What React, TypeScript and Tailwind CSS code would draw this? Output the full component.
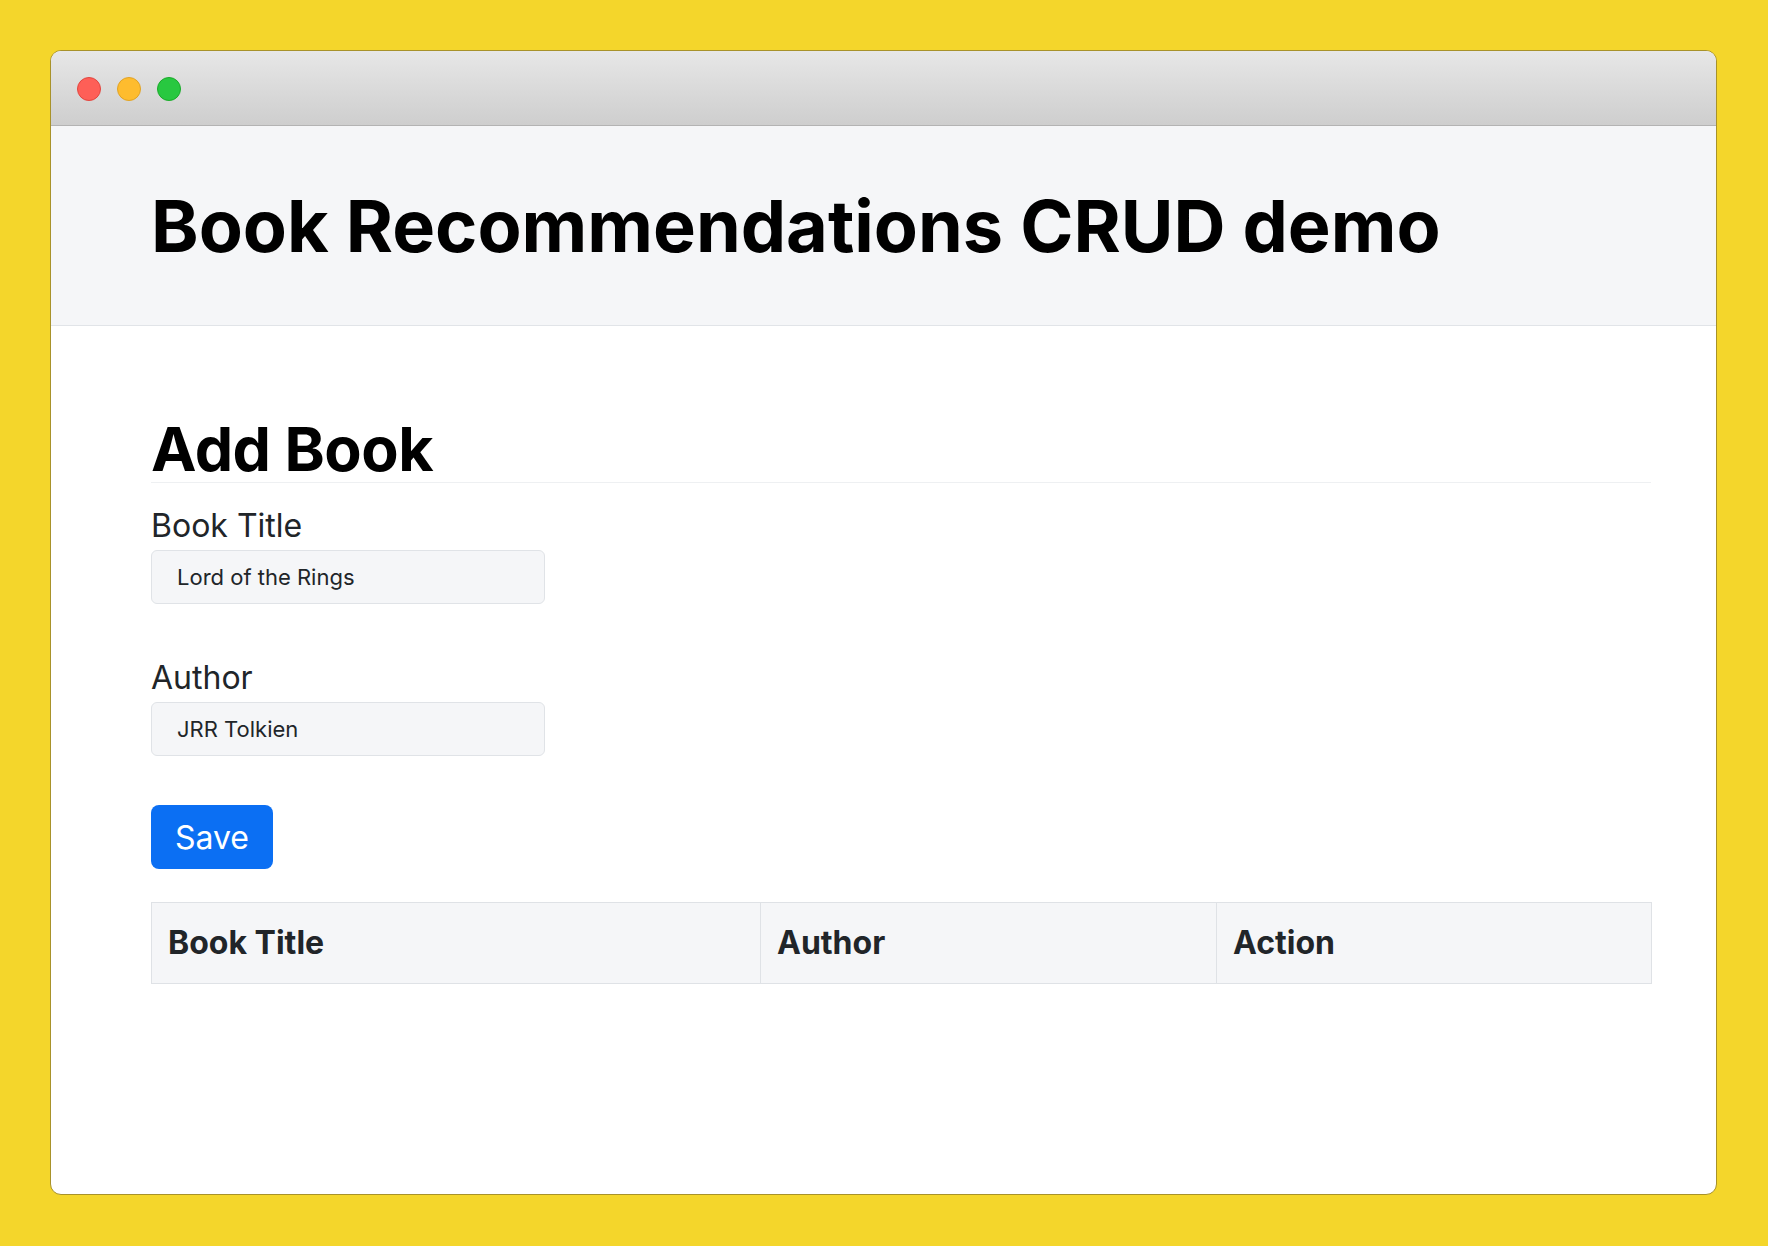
const font = { fontFamily: "Inter, 'Noto Sans', sans-serif" };

function TrafficLights() {
  return (
    <div className="mt-[2px] flex items-center gap-4">
      <span className="h-6 w-6 rounded-full border border-[#e2463f] bg-[#fe5f57]" />
      <span className="h-6 w-6 rounded-full border border-[#e1a325] bg-[#febc2e]" />
      <span className="h-6 w-6 rounded-full border border-[#1aab29] bg-[#28c840]" />
    </div>
  );
}

function Field({ label, value }: { label: string; value: string }) {
  return (
    <div className="flex flex-col">
      <label className="mb-[8px] text-[32px] leading-[32px] text-[#212529]">
        {label}
      </label>
      <input
        readOnly
        value={value}
        className="h-[54px] w-[394px] rounded-[6px] border border-[#e0e3e7] bg-[#f5f6f8] pl-[25px] text-[22px] text-[#212529] outline-none"
      />
    </div>
  );
}

export default function App() {
  return (
    <div
      className="min-h-[1246px] w-full bg-[#f4d62b] pl-[50px] pt-[50px]"
      style={font}
    >
      <div className="flex h-[1145px] w-[1667px] flex-col overflow-hidden rounded-[11px] border border-[#a8922a] bg-white">
        <div className="flex h-[75px] shrink-0 items-center border-b border-[#b3b3b3] bg-gradient-to-b from-[#e7e7e7] to-[#cecece] pl-[26px]">
          <TrafficLights />
        </div>

        <header className="shrink-0 border-b border-[#e1e4e8] bg-[#f5f6f8] pb-[63px] pl-[100px] pt-[64px]">
          <h1 className="text-[72px] font-bold leading-[72px] text-black">
            Book Recommendations CRUD demo
          </h1>
        </header>

        <main className="ml-[100px] w-[1500px] pt-[92px]">
          <h2 className="border-b border-[#eef0f2] pb-[2px] text-[61px] font-bold leading-[62px] tracking-[-0.5px] text-black">
            Add Book
          </h2>

          <div className="mt-[27px] flex flex-col gap-[58px]">
            <Field label="Book Title" value="Lord of the Rings" />
            <Field label="Author" value="JRR Tolkien" />
          </div>

          <button className="mt-[49px] h-[64px] w-[122px] rounded-[8px] bg-[#0b6ff3] pt-[2px] text-[32px] text-white">
            Save
          </button>

          <table className="mt-[33px] w-[1500px] table-fixed border-collapse">
            <colgroup>
              <col className="w-[609px]" />
              <col className="w-[456px]" />
              <col className="w-[435px]" />
            </colgroup>
            <thead>
              <tr className="h-[81px] bg-[#f5f6f8]">
                {["Book Title", "Author", "Action"].map((h) => (
                  <th
                    key={h}
                    className="border border-[#dfe2e6] pl-4 text-left text-[32px] font-bold text-[#212529]"
                  >
                    {h}
                  </th>
                ))}
              </tr>
            </thead>
          </table>
        </main>
      </div>
    </div>
  );
}
